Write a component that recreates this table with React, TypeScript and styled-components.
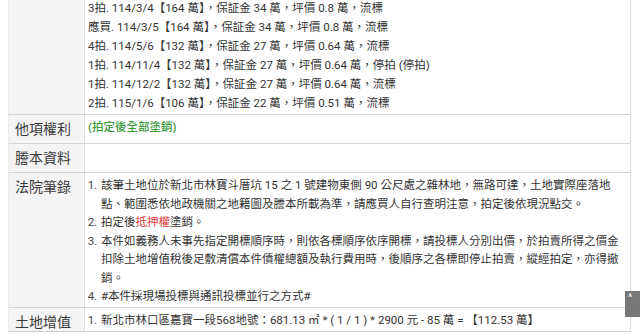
import React from "react";
import styled, { createGlobalStyle } from "styled-components";

const GlobalStyle = createGlobalStyle`
    html, body {
        margin: 0;
        padding: 0;
        background: #ffffff;
        overflow: hidden;
    }
    body {
        font-family: "Roboto", "Noto Sans CJK TC", sans-serif;
        color: #333333;
    }
`;

const auctionLog = [
    "3拍. 114/3/4【164 萬】，保証金 34 萬，坪價 0.8 萬，流標",
    "應買. 114/3/5【164 萬】，保証金 34 萬，坪價 0.8 萬，流標",
    "4拍. 114/5/6【132 萬】，保証金 27 萬，坪價 0.64 萬，流標",
    "1拍. 114/11/4【132 萬】，保証金 27 萬，坪價 0.64 萬，停拍 (停拍)",
    "1拍. 114/12/2【132 萬】，保証金 27 萬，坪價 0.64 萬，流標",
    "2拍. 115/1/6【106 萬】，保証金 22 萬，坪價 0.51 萬，流標",
];

export default function App() {
    return (
        <>
            <GlobalStyle />
            <Page>
                <InfoTable>
                    <Row>
                        <Label></Label>
                        <Value $dense>
                            {auctionLog.map((line) => (
                                <div key={line}>{line}</div>
                            ))}
                        </Value>
                    </Row>
                    <Row>
                        <Label>他項權利</Label>
                        <Value>
                            <Green>(拍定後全部塗銷)</Green>
                        </Value>
                    </Row>
                    <Row>
                        <Label>謄本資料</Label>
                        <Value></Value>
                    </Row>
                    <Row>
                        <Label>法院筆錄</Label>
                        <Value>
                            <NoteList>
                                <li>該筆土地位於新北市林寶斗厝坑 15 之 1 號建物東側 90 公尺處之雜林地，無路可達，土地實際座落地點、範圍悉依地政機關之地籍圖及謄本所載為準，請應買人自行查明注意，拍定後依現況點交。</li>
                                <li>拍定後<Red>抵押權</Red>塗銷。</li>
                                <li>本件如義務人未事先指定開標順序時，則依各標順序依序開標，請投標人分別出價，於拍賣所得之價金扣除土地增值稅後足敷清償本件債權總額及執行費用時，後順序之各標即停止拍賣，縱經拍定，亦得撤銷。</li>
                                <li>#本件採現場投標與通訊投標並行之方式#</li>
                            </NoteList>
                        </Value>
                    </Row>
                    <Row $last>
                        <Label $tight>土地增值</Label>
                        <Value>
                            <NoteList>
                                <li>新北市林口區嘉寶一段568地號：681.13 ㎡ * ( 1 / 1 ) * 2900 元 - 85 萬 = 【112.53 萬】</li>
                            </NoteList>
                        </Value>
                    </Row>
                </InfoTable>
            </Page>
            <TopButton aria-label="top">^</TopButton>
        </>
    );
}

const Page = styled.div`
    padding: 0 9px 0 8px;
    margin-top: -4px;
`;

const InfoTable = styled.div`
    border-right: 1px solid #dcdcdc;
    border-left: 1px solid #ececec;
`;

const Row = styled.div<{ $last?: boolean }>`
    display: grid;
    grid-template-columns: 76px 1fr;
    border-bottom: 1px solid ${(p) => (p.$last ? "#cfcfcf" : "#d6d6d6")};
`;

const Label = styled.div<{ $tight?: boolean }>`
    background: #f4f4f4;
    border-right: 1px solid #dedede;
    padding: ${(p) => (p.$tight ? "5px 0 0 6px" : "5px 0 5px 6px")};
    font-size: 14px;
    line-height: 18px;
    color: #3a3a3a;
`;

const Value = styled.div<{ $dense?: boolean }>`
    padding: 3px 5px 1px 3px;
    font-size: 11.5px;
    line-height: ${(p) => (p.$dense ? "19px" : "18.5px")};
    color: #333333;
`;

const Green = styled.span`
    color: #3c9a3c;
    font-weight: 500;
`;

const Red = styled.span`
    color: #e0393b;
`;

const NoteList = styled.ol`
    margin: 0;
    padding-left: 12px;

    li {
        padding-left: 1px;
    }

    li::marker {
        color: #444444;
    }
`;

const TopButton = styled.div`
    position: fixed;
    right: 0;
    top: 291px;
    width: 15px;
    height: 26px;
    background: #777777;
    color: #ffffff;
    font-size: 10px;
    line-height: 14px;
    padding-left: 3px;
    box-sizing: border-box;
`;
